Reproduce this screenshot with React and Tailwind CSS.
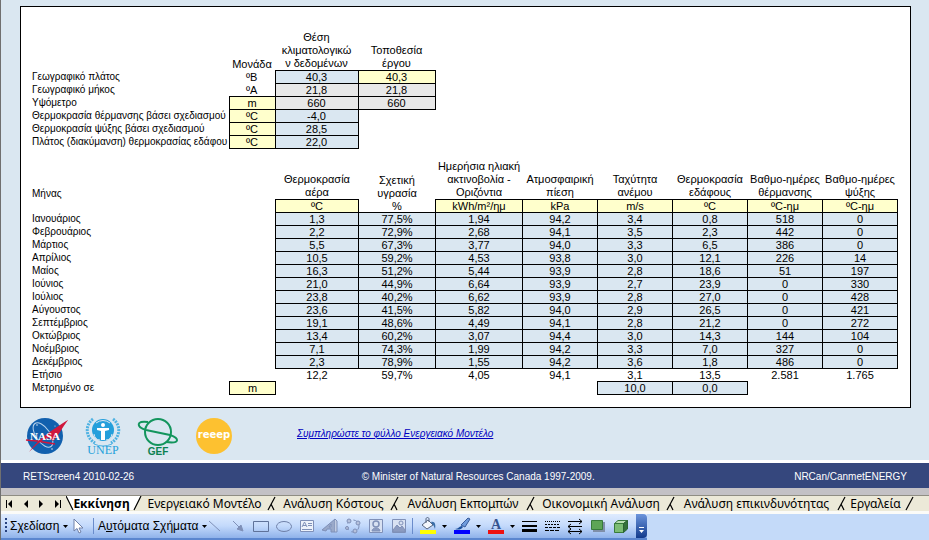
import clsx from "clsx";

const LOCATION_ROWS = [
  { label: "Γεωγραφικό πλάτος", unit: "ºΒ", climate: "40,3", site: "40,3" },
  { label: "Γεωγραφικό μήκος", unit: "ºΑ", climate: "21,8", site: "21,8", gray: true },
  { label: "Υψόμετρο", unit: "m", climate: "660", site: "660", gray: true, unitInput: true },
  { label: "Θερμοκρασία θέρμανσης βάσει σχεδιασμού", unit: "ºC", climate: "-4,0", unitInput: true },
  { label: "Θερμοκρασία ψύξης βάσει σχεδιασμού", unit: "ºC", climate: "28,5", unitInput: true },
  { label: "Πλάτος (διακύμανση) θερμοκρασίας εδάφου", unit: "ºC", climate: "22,0", unitInput: true },
];

const COLUMNS = [
  { lines: ["Θερμοκρασία", "αέρα"], unit: "ºC" },
  { lines: ["Σχετική", "υγρασία"], unit: "%", plain: true },
  { lines: ["Ημερήσια ηλιακή", "ακτινοβολία -", "Οριζόντια"], unit: "kWh/m²/ημ" },
  { lines: ["Ατμοσφαιρική", "πίεση"], unit: "kPa" },
  { lines: ["Ταχύτητα", "ανέμου"], unit: "m/s" },
  { lines: ["Θερμοκρασία", "εδάφους"], unit: "ºC" },
  { lines: ["Βαθμο-ημέρες", "θέρμανσης"], unit: "ºC-ημ" },
  { lines: ["Βαθμο-ημέρες", "ψύξης"], unit: "ºC-ημ" },
];

const MONTHS = [
  ["Ιανουάριος", "1,3", "77,5%", "1,94", "94,2", "3,4", "0,8", "518", "0"],
  ["Φεβρουάριος", "2,2", "72,9%", "2,68", "94,1", "3,5", "2,3", "442", "0"],
  ["Μάρτιος", "5,5", "67,3%", "3,77", "94,0", "3,3", "6,5", "386", "0"],
  ["Απρίλιος", "10,5", "59,2%", "4,53", "93,8", "3,0", "12,1", "226", "14"],
  ["Μαίος", "16,3", "51,2%", "5,44", "93,9", "2,8", "18,6", "51", "197"],
  ["Ιούνιος", "21,0", "44,9%", "6,64", "93,9", "2,7", "23,9", "0", "330"],
  ["Ιούλιος", "23,8", "40,2%", "6,62", "93,9", "2,8", "27,0", "0", "428"],
  ["Αύγουστος", "23,6", "41,5%", "5,82", "94,0", "2,9", "26,5", "0", "421"],
  ["Σεπτέμβριος", "19,1", "48,6%", "4,49", "94,1", "2,8", "21,2", "0", "272"],
  ["Οκτώβριος", "13,4", "60,2%", "3,07", "94,4", "3,0", "14,3", "144", "104"],
  ["Νοέμβριος", "7,1", "74,3%", "1,99", "94,2", "3,3", "7,0", "327", "0"],
  ["Δεκέμβριος", "2,3", "78,9%", "1,55", "94,2", "3,6", "1,8", "486", "0"],
];

const ANNUAL = ["12,2", "59,7%", "4,05", "94,1", "3,1", "13,5", "2.581", "1.765"];

const TABS = [
  { label: "Ενεργειακό Μοντέλο", width: "w-[135px]" },
  { label: "Ανάλυση Κόστους", width: "w-[123px]" },
  { label: "Ανάλυση Εκπομπών", width: "w-[136px]" },
  { label: "Οικονομική Ανάλυση", width: "w-[140px]" },
  { label: "Ανάλυση επικινδυνότητας", width: "w-[171px]" },
  { label: "Εργαλεία", width: "w-[67px]" },
];

const CELL = "h-[13px] p-0 text-center leading-3 font-normal whitespace-nowrap";
const BOX = "border border-black";
const LABEL = "h-[13px] p-0 pl-[11px] text-left leading-3 font-normal whitespace-nowrap text-[10px]";

function SheetColumns() {
  return (
    <colgroup>
      <col />
      <col className="w-[46px]" />
      <col className="w-[83px]" />
      <col className="w-[77px]" />
      <col className="w-[87px]" />
      <col className="w-[75px]" />
      <col className="w-[75px]" />
      <col className="w-[75px]" />
      <col className="w-[75px]" />
      <col className="w-[75px]" />
    </colgroup>
  );
}

function LocationTable() {
  const head = "p-0 align-bottom font-normal leading-[13px]";
  return (
    <div className="pr-px">
      <table className="w-full table-fixed border-collapse">
        <SheetColumns />
        <thead>
          <tr className="h-[39px]">
            <td />
            <th className={head}>Μονάδα</th>
            <th className={head}>
              Θέση
              <br />
              κλιματολογικώ
              <br />ν δεδομένων
            </th>
            <th className={head}>
              Τοποθεσία
              <br />
              έργου
            </th>
            <td colSpan={6} />
          </tr>
        </thead>
        <tbody>
          {LOCATION_ROWS.map((row) => (
            <tr key={row.label}>
              <th scope="row" className={LABEL}>{row.label}</th>
              <td className={clsx(CELL, row.unitInput && BOX, row.unitInput && "bg-[#ffffcc]")}>{row.unit}</td>
              <td className={clsx(CELL, BOX, row.gray ? "bg-[#e8e8e8]" : "bg-[#dae7f1]")}>{row.climate}</td>
              {row.site ? (
                <td className={clsx(CELL, BOX, row.gray ? "bg-[#e8e8e8]" : "bg-[#ffffcc]")}>{row.site}</td>
              ) : (
                <td />
              )}
              <td colSpan={6} />
            </tr>
          ))}
        </tbody>
      </table>
    </div>
  );
}

function ClimateTable() {
  return (
    <table className="mt-[11px] w-full table-fixed border-collapse">
      <SheetColumns />
      <thead>
        <tr className="h-[39px]">
          <th className="p-0 pl-[11px] text-left align-bottom text-[10px] leading-[13px] font-normal">Μήνας</th>
          <td />
          {COLUMNS.map((col, i) => (
            <th key={i} className="p-0 align-bottom leading-[13px] font-normal whitespace-nowrap">
              {col.lines.map((line) => (
                <div key={line} className="-mx-2">{line}</div>
              ))}
            </th>
          ))}
        </tr>
        <tr>
          <td />
          <td />
          {COLUMNS.map((col, i) => (
            <td key={i} className={clsx(CELL, !col.plain && BOX, !col.plain && "bg-[#ffffcc]")}>
              {col.unit}
            </td>
          ))}
        </tr>
      </thead>
      <tbody>
        {MONTHS.map(([month, ...values]) => (
          <tr key={month}>
            <th scope="row" className={LABEL}>{month}</th>
            <td />
            {values.map((value, i) => (
              <td key={i} className={clsx(CELL, BOX, "bg-[#dae7f1]")}>{value}</td>
            ))}
          </tr>
        ))}
        <tr>
          <th scope="row" className={LABEL}>Ετήσιο</th>
          <td />
          {ANNUAL.map((value, i) => (
            <td key={i} className={CELL}>{value}</td>
          ))}
        </tr>
        <tr>
          <th scope="row" className={LABEL}>Μετρημένο σε</th>
          <td className={clsx(CELL, BOX, "bg-[#ffffcc]")}>m</td>
          <td colSpan={4} />
          <td className={clsx(CELL, BOX, "bg-[#dae7f1]")}>10,0</td>
          <td className={clsx(CELL, BOX, "bg-[#dae7f1]")}>0,0</td>
          <td colSpan={2} />
        </tr>
      </tbody>
    </table>
  );
}

// Partner logos

function NasaLogo() {
  return (
    <svg width="44" height="44" viewBox="0 0 44 44" role="img" aria-label="NASA">
      <circle cx="20" cy="20" r="18" fill="#1160ae" />
      <ellipse cx="18" cy="19" rx="7" ry="14" fill="none" stroke="#b9d3ec" strokeWidth="1" transform="rotate(-35 18 19)" />
      <path d="M43 4 C37 12 34 19 28 25 L24 22 L17 24 Z" fill="#d0173d" />
      <path d="M43 4 C30 12 14 22 4 36 C14 26 24 19 32 16 Z" fill="#d0173d" />
      <path d="M1 24 L12 25 L30 28" fill="none" stroke="#d0173d" strokeWidth="1.4" />
      <text x="20" y="24" textAnchor="middle" fontSize="11" fontWeight="700" fill="#fff" fontFamily="Liberation Serif, serif">NASA</text>
      <circle cx="12" cy="9" r="0.7" fill="#fff" />
      <circle cx="27" cy="33" r="0.7" fill="#fff" />
      <circle cx="30" cy="10" r="0.5" fill="#fff" />
    </svg>
  );
}

function UnepLogo() {
  return (
    <svg width="36" height="44" viewBox="0 0 36 44" role="img" aria-label="UNEP">
      <g fill="none" stroke="#4fb2e2">
        <path d="M8 3 C0 9 0 21 10 27 M28 3 C36 9 36 21 26 27" strokeWidth="3" strokeDasharray="2 1" />
        <path d="M9 28 Q18 32 27 28" strokeWidth="1" />
      </g>
      <circle cx="18" cy="14" r="11" fill="#249fdb" />
      <path d="M11 7 Q18 2 25 7 M9 18 Q10 24 15 24 M27 18 Q26 24 21 24" fill="none" stroke="#dae7f1" />
      <circle cx="18" cy="9" r="2" fill="#fff" />
      <path d="M12 12 H24 V14 L20 15 V24 H16 V15 L12 14 Z" fill="#fff" />
      <text x="18" y="38" textAnchor="middle" fontSize="12" fill="#249fdb" fontFamily="Liberation Serif, serif">UNEP</text>
    </svg>
  );
}

function GefLogo() {
  return (
    <svg width="42" height="44" viewBox="0 0 42 44" role="img" aria-label="GEF">
      <g fill="none" stroke="#13955d" strokeWidth="2">
        <circle cx="21" cy="16" r="13" />
        <path d="M11 6 C-1 4 -1 11 9 14 L33 19 C42 22 44 28 29 26" />
      </g>
      <text x="21" y="39" textAnchor="middle" fontSize="10" fontWeight="700" fill="#0b8150" fontFamily="Liberation Sans, sans-serif">GEF</text>
    </svg>
  );
}

function ReeepLogo() {
  return (
    <svg width="38" height="44" viewBox="0 0 38 44" role="img" aria-label="reeep">
      <circle cx="19" cy="20" r="18" fill="#fdc130" />
      <text x="19" y="22" textAnchor="middle" fontSize="10" fontWeight="700" fill="#fff" fontFamily="DejaVu Sans, sans-serif">reeep</text>
    </svg>
  );
}

// Sheet tabs

function NavArrow({ label, d }) {
  return (
    <button type="button" aria-label={label} className="flex h-4 w-4 items-center justify-center">
      <svg width="9" height="8" viewBox="0 0 9 8">
        <path d={d} fill="#000" />
      </svg>
    </button>
  );
}

function Slash({ last }) {
  return (
    <svg width="10" height="15" viewBox="0 0 10 15" className="absolute top-0 -right-[5px] z-10">
      <path d={last ? "M9 1 L2 14" : "M8 1 L1 14 M4 8 L7 14"} fill="none" stroke="#000" strokeWidth="1.2" />
    </svg>
  );
}

function SheetTabs() {
  return (
    <nav className="flex h-4 border-t border-[#8f8d83] bg-[#ece9d8] font-['Noto_Sans',sans-serif] text-xs">
      <div className="flex w-[65px] shrink-0 items-center">
        <NavArrow label="Πρώτο φύλλο" d="M1 0h1v8H1z M7 0v8L3 4z" />
        <NavArrow label="Προηγούμενο φύλλο" d="M7 0v8L3 4z" />
        <NavArrow label="Επόμενο φύλλο" d="M2 0v8l4-4z" />
        <NavArrow label="Τελευταίο φύλλο" d="M2 0v8l4-4z M7 0h1v8H7z" />
      </div>
      <button type="button" className="relative w-[71px] shrink-0 leading-[15px] font-bold">
        <svg width="77" height="15" viewBox="0 0 77 15" className="absolute top-0 left-0">
          <path d="M0 0 L7 14 H68 L75 0 Z" fill="#fff" />
          <path d="M0 0 L7 14 M68 14 L75 0" fill="none" stroke="#000" strokeWidth="1.2" />
        </svg>
        <span className="relative">Εκκίνηση</span>
      </button>
      {TABS.map((tab, i) => (
        <button
          key={tab.label}
          type="button"
          className={clsx("relative shrink-0 leading-[15px] whitespace-nowrap", tab.width)}
        >
          {tab.label}
          <Slash last={i === TABS.length - 1} />
        </button>
      ))}
    </nav>
  );
}

// Drawing toolbar

function Caret() {
  return (
    <svg width="5" height="3" viewBox="0 0 5 3" className="shrink-0">
      <path d="M0 0h5L2.500 3z" fill="#000" />
    </svg>
  );
}

function Tool({ label, children }) {
  return (
    <button type="button" aria-label={label} className="flex w-[23px] shrink-0 items-center justify-center">
      <svg width="18" height="18" viewBox="0 0 18 18" fill="none" stroke="#7f90b8">
        {children}
      </svg>
    </button>
  );
}

function ColorTool({ label, color, children }) {
  return (
    <button type="button" aria-label={label} className="flex w-[34px] shrink-0 items-center gap-[5px] pl-1">
      <svg width="18" height="18" viewBox="0 0 18 18" fill="none" className="shrink-0">
        {children}
        <path d="M1 13h16v4H1z" fill={color} />
      </svg>
      <Caret />
    </button>
  );
}

function DrawingToolbar() {
  return (
    <div className="flex h-[26px] bg-[#c4daf9] text-xs">
      <div className="flex border-b-2 border-[#5b86cf] bg-linear-to-b from-[#dfebfe] via-[#c3d9fb] to-[#8fb2ea]">
        <svg width="9" height="24" viewBox="0 0 9 24">
          <path d="M4 4h2v2H4z M4 8h2v2H4z M4 12h2v2H4z M4 16h2v2H4z" fill="#27417f" />
        </svg>
        <button type="button" className="flex w-[56px] items-center gap-1 whitespace-nowrap">
          <span>Σ<u>χ</u>εδίαση</span>
          <Caret />
        </button>
        <Tool label="Επιλογή αντικειμένων">
          <path d="M5 2 V14 L8 11.500 L10 16 L12 15 L10 11 H14 Z" fill="#fff" stroke="#6f80a8" />
        </Tool>
        <span className="mx-1 my-1 w-px bg-[#6a8ccb]" />
        <button type="button" className="flex w-[105px] items-center gap-1 whitespace-nowrap">
          <span>Α<u>υ</u>τόματα Σχήματα</span>
          <Caret />
        </button>
        <Tool label="Γραμμή">
          <path d="M3 4 L14 14" />
        </Tool>
        <Tool label="Βέλος">
          <path d="M4 4 L12 12" />
          <path d="M14 14 L8 12 L12 8 Z" fill="#7f90b8" />
        </Tool>
        <Tool label="Ορθογώνιο">
          <path d="M1.500 4.500h15v10h-15z" stroke="#5f7299" />
        </Tool>
        <Tool label="Έλλειψη">
          <ellipse cx="9" cy="9.500" rx="7.500" ry="5" stroke="#6f80a8" />
        </Tool>
        <Tool label="Πλαίσιο κειμένου">
          <path d="M2.500 3.500h13v11h-13z" fill="#edf2fb" />
          <path d="M4 10 L6.500 5 L9 10 M5 8.500h3 M10 6.500h4 M10 8.500h4 M4 12.500h10" />
        </Tool>
        <Tool label="WordArt">
          <path d="M1 13 L14 2 V15 H10 V12 H6 L5 14 Z M8 10 H10 V7 Z" fill="#9aa9c9" fillRule="evenodd" />
          <path d="M14 2 L16 4 V15 H14" fill="#c3cde2" />
        </Tool>
        <Tool label="Διάγραμμα">
          <circle cx="9" cy="9" r="6" strokeDasharray="4 3" />
          <circle cx="5" cy="4" r="2" fill="#b5c1dc" />
          <circle cx="14" cy="6" r="2" fill="#b5c1dc" />
          <circle cx="11" cy="14" r="2" fill="#b5c1dc" />
          <circle cx="3" cy="11" r="1.500" fill="#b5c1dc" />
        </Tool>
        <Tool label="Εικόνα Clip Art">
          <path d="M2.500 2.500h13v13h-13z" fill="#d8e1f2" />
          <circle cx="9" cy="7" r="3" strokeWidth="1.500" />
          <path d="M5 14 C5 10 13 10 13 14 Z" fill="#8c9bc0" />
        </Tool>
        <Tool label="Εικόνα από αρχείο">
          <path d="M2.500 2.500h13v13h-13z" fill="#d8e1f2" />
          <circle cx="11" cy="6" r="2" />
          <path d="M3 13 L7 8 L10 11 L12 9 L15 13 V15 H3 Z" fill="#8c9bc0" />
        </Tool>
        <span className="mx-[2px] my-1 w-px bg-[#6a8ccb]" />
        <ColorTool label="Χρώμα γεμίσματος" color="#ffff00">
          <path d="M3 8 L9 3 L14 8 L8 12 Z" fill="#f4f7fc" stroke="#56657f" />
          <path d="M7 6 V2 C7 0 10 0 10 2 V5" stroke="#56657f" />
          <path d="M12 5 C16 4 17 8 16 12 C15 10 15 8 13 7 Z" fill="#3a6ea8" />
        </ColorTool>
        <ColorTool label="Χρώμα γραμμής" color="#0000ff">
          <path d="M2 12 C6 12 6 9 9 9 L10 10 C8 13 5 13 2 12 Z" fill="#1b4f9c" />
          <path d="M8 8 L15 1 L17 2 L12 10 Z" fill="#6f9bdc" stroke="#36599a" />
        </ColorTool>
        <ColorTool label="Χρώμα γραμματοσειράς" color="#ee1111">
          <text x="9" y="12" textAnchor="middle" fontSize="14" fontWeight="700" fill="#35538f" fontFamily="Liberation Serif, serif">A</text>
        </ColorTool>
        <Tool label="Στυλ γραμμής">
          <path d="M2 4h15v1H2z M2 8h15v2H2z M2 12h15v3H2z" fill="#000" stroke="none" />
        </Tool>
        <Tool label="Στυλ παύλας">
          <path d="M2 4.500h15" stroke="#000" strokeDasharray="1 1" />
          <path d="M2 7.500h15" stroke="#000" strokeDasharray="2 1" />
          <path d="M2 10.500h15" stroke="#000" strokeDasharray="3 1" />
          <path d="M2 13.500h15" stroke="#000" strokeDasharray="4 1" />
        </Tool>
        <Tool label="Στυλ βέλους">
          <path d="M2 4.500h14 M13 2 L16 4.500 L13 7 M2 9.500h14 M5 7 L2 9.500 L5 12 M2 14.500h14 M5 12 L2 14.500 L5 17 M13 12 L16 14.500 L13 17" stroke="#000" />
        </Tool>
        <Tool label="Στυλ σκιάς">
          <path d="M4 5h12v10H4z" fill="#7f8fa9" stroke="none" />
          <path d="M2.500 3.500h11v9h-11z" fill="#5da557" stroke="#387b3c" />
        </Tool>
        <Tool label="Στυλ 3-Δ">
          <path d="M2.500 6.500h9v9h-9z" fill="#7cbd74" stroke="#387b3c" />
          <path d="M2.500 6.500 L6 3.500 H15.500 L11.500 6.500 Z" fill="#b9dfb1" stroke="#387b3c" />
          <path d="M11.500 6.500 L15.500 3.500 V12 L11.500 15.500 Z" fill="#34713a" stroke="#2b6332" />
        </Tool>
        <button
          type="button"
          aria-label="Επιλογές γραμμής εργαλείων"
          className="ml-1 flex w-[11px] items-end justify-center rounded-r-sm bg-linear-to-b from-[#6d95dc] to-[#123a8c] pb-1"
        >
          <svg width="7" height="7" viewBox="0 0 7 7">
            <path d="M1 0h5v1H1z M1 3h5L3.500 6z" fill="#fff" />
          </svg>
        </button>
      </div>
    </div>
  );
}

export default function App() {
  return (
    <div className="border-l border-[#707070] bg-[#dae7f1] font-['Liberation_Sans',Arial,sans-serif] text-[11px] text-black">
      <main className="pt-[6px] pr-[18px] pl-[19px]">
        <section className="border border-black bg-white pt-6 pr-3 pb-3">
          <LocationTable />
          <ClimateTable />
        </section>
        <div className="flex h-[52px] items-start pt-2">
          <div className="flex gap-4 pl-[5px]">
            <NasaLogo />
            <UnepLogo />
            <GefLogo />
            <ReeepLogo />
          </div>
          <a href="#energy-model" className="mt-[10px] ml-16 text-[10px] text-[#0000c0] italic underline">
            Συμπληρώστε το φύλλο Ενεργειακό Μοντέλο
          </a>
        </div>
      </main>
      <footer className="flex h-7 items-center justify-between border-t-[3px] border-white bg-[#35477d] px-[22px] pt-[2px] text-[10px] text-white">
        <span>RETScreen4 2010-02-26</span>
        <span className="ml-7">© Minister of Natural Resources Canada 1997-2009.</span>
        <span>NRCan/CanmetENERGY</span>
      </footer>
      <div className="h-[7px] bg-[#c3c1c5]" />
      <SheetTabs />
      <div className="h-[3px] bg-[#fbfbf8]" />
      <DrawingToolbar />
    </div>
  );
}
